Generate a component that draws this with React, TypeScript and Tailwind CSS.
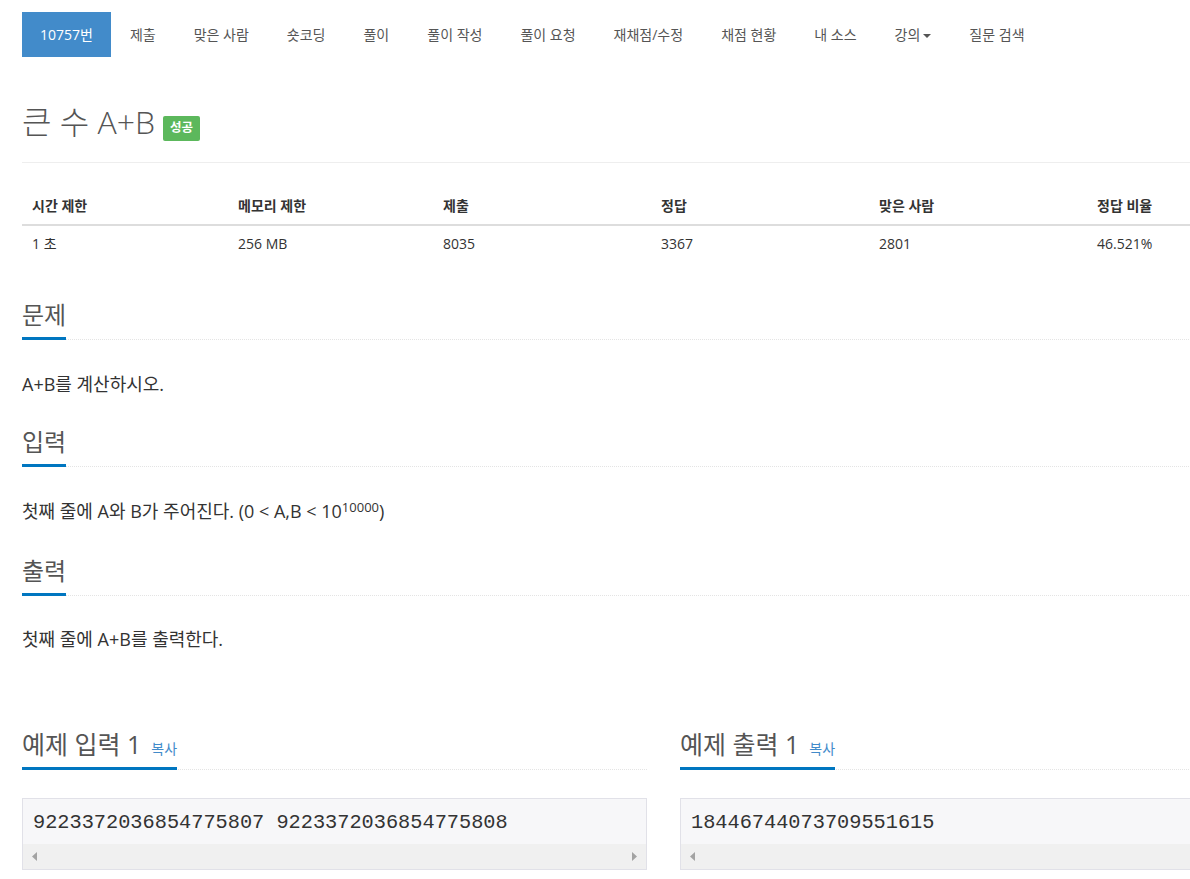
import React from "react";

const navItems = [
  "제출",
  "맞은 사람",
  "숏코딩",
  "풀이",
  "풀이 작성",
  "풀이 요청",
  "재채점/수정",
  "채점 현황",
  "내 소스",
];

const stats = [
  { label: "시간 제한", value: "1 초", w: "w-[206px]" },
  { label: "메모리 제한", value: "256 MB", w: "w-[205px]" },
  { label: "제출", value: "8035", w: "w-[218px]" },
  { label: "정답", value: "3367", w: "w-[218px]" },
  { label: "맞은 사람", value: "2801", w: "w-[218px]" },
  { label: "정답 비율", value: "46.521%", w: "w-[218px]" },
];

function Headline({ children, className = "", span = "pb-[9px]" }: { children: React.ReactNode; className?: string; span?: string }) {
  return (
    <h2 className={`flex border-b border-dotted border-[#e4e4e4] font-normal leading-[26px] text-[#555] ${className}`}>
      <span className={`-mb-px border-b-[3px] border-[#0076c0] ${span}`}>{children}</span>
    </h2>
  );
}

function SampleBox({ text }: { text: string }) {
  return (
    <div className="border border-[#e1e1e8] bg-[#f7f7f9]">
      <div className="flex h-[45px] items-center pl-[10px] pt-[4px] font-['Liberation_Mono',monospace] text-[20.3px] text-[#333]">
        {text}
      </div>
      <div className="flex h-[25px] items-center justify-between bg-[#f0f0f0] px-[9px]">
        <svg width="6" height="9" viewBox="0 0 6 9">
          <path d="M5 0 L0 4.5 L5 9 Z" fill="#a3a3a3" />
        </svg>
        <svg width="6" height="9" viewBox="0 0 6 9">
          <path d="M1 0 L6 4.5 L1 9 Z" fill="#a3a3a3" />
        </svg>
      </div>
    </div>
  );
}

export default function App() {
  return (
    <div className="h-screen w-full overflow-hidden bg-white font-['Open_Sans','Noto_Sans_CJK_KR',sans-serif] text-[#333]">
      <div className="w-[1305px] pl-[22px]">
        {/* 상단 메뉴 */}
        <ul className="flex pt-[12px] text-[14px]">
          <li className="flex h-[45px] items-center bg-[#428bca] px-[18px] text-white">10757번</li>
          {navItems.map((item) => (
            <li key={item} className="flex h-[45px] items-center px-[19px] text-[#555]">
              {item}
            </li>
          ))}
          <li className="flex h-[45px] items-center px-[19px] text-[#555]">
            강의
            <span className="ml-[3px] mt-[2px] h-0 w-0 border-x-[4px] border-t-[4px] border-x-transparent border-t-[#555]" />
          </li>
          <li className="flex h-[45px] items-center px-[19px] text-[#555]">질문 검색</li>
        </ul>

        {/* 제목 */}
        <div className="mt-[47px] flex items-start gap-[8px] border-b border-[#eee] pb-[21px]">
          <h1 className="text-[32px] font-light leading-[35px] text-[#555]">큰 수 A+B</h1>
          <span className="mt-[12px] flex h-[25px] items-center rounded-[2px] bg-[#5cb85c] px-[7px] text-[12.5px] font-bold text-white">
            성공
          </span>
        </div>

        {/* 제한 표 */}
        <table className="mt-[24px] w-[1283px] table-fixed text-[14px]">
          <thead>
            <tr className="border-b-2 border-[#ddd]">
              {stats.map((s) => (
                <th key={s.label} className={`${s.w} px-[10px] py-[8px] text-left font-bold leading-[21px]`}>
                  {s.label}
                </th>
              ))}
            </tr>
          </thead>
          <tbody>
            <tr>
              {stats.map((s) => (
                <td key={s.label} className="px-[10px] py-[8px] leading-[20px]">
                  {s.value}
                </td>
              ))}
            </tr>
          </tbody>
        </table>

        {/* 문제 */}
        <Headline className="mt-[40px] text-[24px]">문제</Headline>
        <p className="mt-[32px] text-[18px] leading-[24px]">A+B를 계산하시오.</p>

        <Headline className="mt-[33px] text-[24px]">입력</Headline>
        <p className="mt-[32px] text-[18px] leading-[24px]">
          첫째 줄에 A와 B가 주어진다. (0 &lt; A,B &lt; 10<sup className="text-[13px]">10000</sup>)
        </p>

        <Headline className="mt-[35px] text-[24px]">출력</Headline>
        <p className="mt-[31px] text-[18px] leading-[24px]">첫째 줄에 A+B를 출력한다.</p>

        {/* 예제 */}
        <div className="mt-[80px] grid w-[1283px] grid-cols-2 gap-[33px]">
          <div>
            <Headline className="text-[25px]" span="pb-[5px]">
              예제 입력 1<a className="ml-[10px] text-[14px] text-[#428bca]">복사</a>
            </Headline>
            <div className="mt-[28px]">
              <SampleBox text="9223372036854775807 9223372036854775808" />
            </div>
          </div>
          <div>
            <Headline className="text-[25px]" span="pb-[5px]">
              예제 출력 1<a className="ml-[10px] text-[14px] text-[#428bca]">복사</a>
            </Headline>
            <div className="mt-[28px]">
              <SampleBox text="18446744073709551615" />
            </div>
          </div>
        </div>
      </div>
    </div>
  );
}
